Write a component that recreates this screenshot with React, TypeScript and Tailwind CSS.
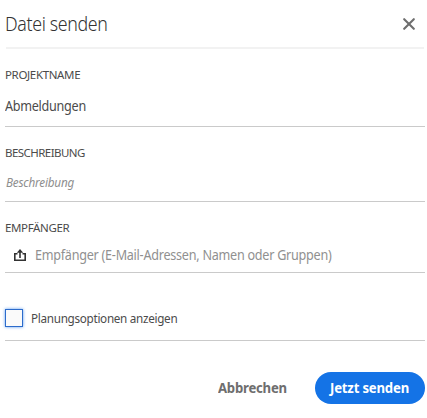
function Label({ children, className }: { children: string; className: string }) {
  return <label className={`block h-4 whitespace-nowrap text-[11.5px] leading-4 text-[#4b4b4b] ${className}`}>{children}</label>;
}

export default function App() {
  return (
    <main className="h-[418px] w-[427px] overflow-hidden bg-white pr-[2px] pl-[5px] font-['Noto_Sans',sans-serif] text-[#4b4b4b]">
      <header className="ml-px flex h-[49px] w-[418px] items-start justify-between pt-[10px] shadow-[inset_0_-2px_0_#f2f2f2]">
        <h1 className="-ml-px h-7 origin-left scale-x-89 whitespace-nowrap text-[20px] leading-7 font-light tracking-[-0.4px] text-[#323232]">Datei senden</h1>
        <button aria-label="Schließen" className="mt-2 mr-[9px]">
          <svg width="12" height="12" viewBox="0 0 12 12" fill="none" stroke="#6e6e6e" strokeWidth="2.1" strokeLinecap="round">
            <path d="M1.2 1.2 10.8 10.8M10.8 1.2 1.2 10.8" />
          </svg>
        </button>
      </header>
      <section className="h-[78px] w-[420px] border-b border-[#cacaca] pt-[18px]">
        <Label className="tracking-[-0.35px]">PROJEKTNAME</Label>
        <div className="mt-[13px] h-5 origin-left scale-x-90 whitespace-nowrap text-[14px] leading-5 tracking-[-0.3px]">Abmeldungen</div>
      </section>
      <section className="h-[75px] w-[420px] border-b border-[#cacaca] pt-[18px]">
        <Label className="tracking-[-0.55px]">BESCHREIBUNG</Label>
        <div className="mt-[11px] h-5 origin-left scale-x-90 whitespace-nowrap pl-px text-[13px] leading-5 tracking-[-0.2px] text-[#8e8e8e] italic">Beschreibung</div>
      </section>
      <section className="h-[71px] w-[420px] border-b border-[#cacaca] pt-[18px]">
        <Label className="tracking-[-0.35px]">EMPFÄNGER</Label>
        <div className="mt-[9px] flex h-5 items-start pl-[9px]">
          <svg className="mt-[4px]" width="12" height="13" viewBox="0 0 12 13" fill="none" stroke="#323232" strokeWidth="1.6">
            <path d="M3.5 4.8H.8V11.2H11.2V4.8H8.5M6 9V2" />
            <path d="M6 0 9.2 3.7H2.8Z" fill="#323232" stroke="none" />
          </svg>
          <span className="ml-[9px] origin-left scale-x-90 whitespace-nowrap text-[14px] leading-5 tracking-[-0.28px] text-[#909090]">Empfänger (E-Mail-Adressen, Namen oder Gruppen)</span>
        </div>
      </section>
      <section className="flex h-[68px] w-[420px] items-start border-b border-[#cacaca] pt-9">
        <span role="checkbox" aria-checked="false" className="size-[18px] shrink-0 border border-[#2c6bcb] bg-[#fafafa] shadow-[0_0_3px_#5c9cf0]" />
        <span className="ml-2 origin-left scale-x-90 whitespace-nowrap text-[13px] leading-[19px] tracking-[-0.33px]">Planungsoptionen anzeigen</span>
      </section>
      <footer className="flex w-[420px] items-center justify-end pt-[31px]">
        <button className="mr-[28px] h-8 w-[69px] text-[#6e6e6e]">
          <span className="block origin-left scale-x-94 whitespace-nowrap text-left text-[14px] leading-8 font-bold tracking-[-0.25px]">Abbrechen</span>
        </button>
        <button className="h-8 w-[110px] rounded-full bg-[#1473e6] pl-[15px] text-white">
          <span className="block origin-left scale-x-94 whitespace-nowrap text-left text-[14px] leading-8 font-bold tracking-[-0.2px]">Jetzt senden</span>
        </button>
      </footer>
    </main>
  );
}
